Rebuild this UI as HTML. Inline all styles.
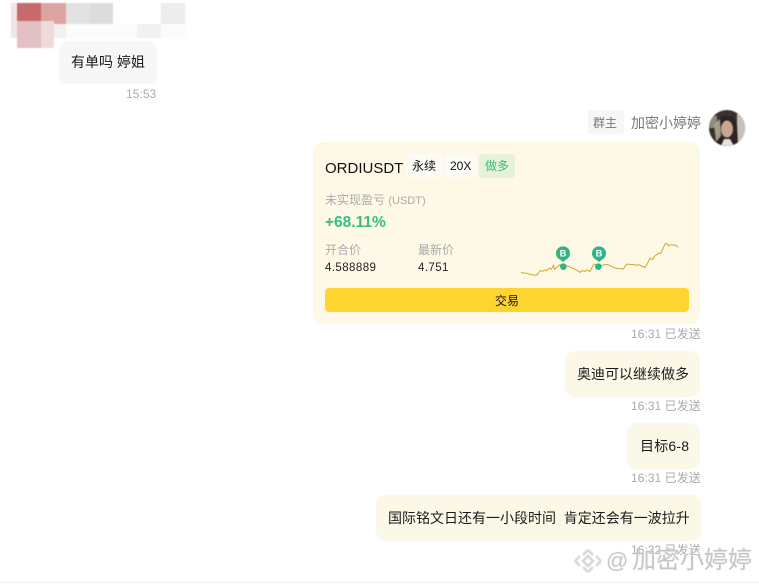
<!DOCTYPE html>
<html><head><meta charset="utf-8">
<style>
html,body{margin:0;padding:0;background:#fff;}
body{width:759px;height:586px;position:relative;overflow:hidden;font-family:"Liberation Sans","Noto Sans CJK SC",sans-serif;color:#111;}
.a{position:absolute;white-space:nowrap;}
.b{position:absolute;border-radius:10px;background:#fbf8e8;}
.t{position:absolute;white-space:nowrap;font-size:12px;color:#aaa;line-height:14px;letter-spacing:.05px;}
.m{position:absolute;white-space:nowrap;font-size:14px;line-height:20px;color:#1a1a1a;}
.p{position:absolute;}
</style></head><body>
<!-- pixelated blur -->
<div class="p" style="left:0;top:0;width:200px;height:50px;filter:blur(.6px)">
<div class="p" style="left:11px;top:3px;width:175px;height:35px;background:#fcfcfc"></div>
<div class="p" style="left:137px;top:24px;width:24px;height:14px;background:#f1f1f1"></div>
<div class="p" style="left:161px;top:3px;width:24px;height:21px;background:#ededed"></div>
<div class="p" style="left:113px;top:3px;width:48px;height:21px;background:#fff"></div>
<div class="p" style="left:66px;top:3px;width:24px;height:21px;background:#e2e2e2"></div>
<div class="p" style="left:90px;top:3px;width:23px;height:21px;background:#dcdcdc"></div>
<div class="p" style="left:17px;top:3px;width:24px;height:21px;background:#c76a6c"></div>
<div class="p" style="left:41px;top:3px;width:25px;height:21px;background:#dca5a1"></div>
<div class="p" style="left:11px;top:3px;width:6px;height:35px;background:#f0e6e4"></div>
<div class="p" style="left:17px;top:21px;width:24px;height:27px;background:#e3c1c3"></div>
<div class="p" style="left:41px;top:21px;width:13px;height:27px;background:#eedbd9"></div>
<div class="p" style="left:54px;top:24px;width:12px;height:14px;background:#f4efed"></div>
</div>

<div class="b" style="left:59px;top:41px;width:98px;height:43px;background:#f7f7f7"></div>
<div class="m" style="left:71px;top:52px;">有单吗 婷姐</div>
<div class="t" style="left:126px;top:87px;">15:53</div>

<!-- header -->
<div class="p" style="left:588px;top:110px;width:36px;height:24px;border-radius:3px;background:#f6f6f6"></div>
<div class="a" style="left:593px;top:116px;font-size:12px;line-height:15px;color:#777">群主</div>
<div class="a" style="left:631px;top:114px;font-size:14px;line-height:18px;color:#777">加密小婷婷</div>
<svg class="p" style="left:709px;top:110px;filter:blur(.5px)" width="36" height="36" viewBox="0 0 36 36">
<defs><clipPath id="c"><circle cx="18" cy="18" r="18"/></clipPath></defs>
<g clip-path="url(#c)">
<rect width="36" height="36" fill="#3a322e"/>
<rect x="28" y="4" width="8" height="32" fill="#c9bfb6"/>
<rect x="0" y="6" width="8" height="12" fill="#8f8a80"/>
<path d="M5 36 L7 14 L13 6 L24 6 L28 14 L29 36Z" fill="#2a2422"/>
<path d="M5 14 L11 9 L12 26 L7 32Z" fill="#a59b88"/>
<ellipse cx="18" cy="19" rx="6" ry="8.500" fill="#c9a691"/>
<path d="M12 36 L15 29 L21 29 L25 36Z" fill="#e6e1da"/>
</g></svg>

<!-- card -->
<div class="b" style="left:313px;top:142px;width:387px;height:182px;background:#fdf9e6"></div>
<div class="a" style="left:325px;top:159px;font-size:15px;line-height:20px;color:#111;">ORDIUSDT</div>
<div class="p" style="left:406px;top:154px;width:36px;height:24px;border-radius:4px;background:#fcfbf5"></div>
<div class="a" style="left:412px;top:159px;font-size:12px;line-height:15px;color:#111">永续</div>
<div class="p" style="left:444px;top:154px;width:33px;height:24px;border-radius:4px;background:#fcfbf5"></div>
<div class="a" style="left:450px;top:159px;font-size:12px;line-height:15px;color:#111">20X</div>
<div class="p" style="left:479px;top:154px;width:36px;height:24px;border-radius:4px;background:#e5f1d9"></div>
<div class="a" style="left:485px;top:159px;font-size:12px;line-height:15px;color:#3cb97f">做多</div>
<div class="a" style="left:325px;top:193px;font-size:12px;line-height:15px;color:#aaa">未实现盈亏 <span style="font-size:11px">(USDT)</span></div>
<div class="a" style="left:325px;top:214px;font-size:15.5px;font-weight:bold;line-height:18px;color:#38bd84">+68.11%</div>
<div class="a" style="left:325px;top:243px;font-size:12px;line-height:15px;color:#aaa">开合价</div>
<div class="a" style="left:418px;top:243px;font-size:12px;line-height:15px;color:#aaa">最新价</div>
<div class="a" style="left:325px;top:261px;font-size:11.5px;line-height:14px;color:#222;letter-spacing:.42px">4.588889</div>
<div class="a" style="left:418px;top:261px;font-size:11.5px;line-height:14px;color:#222;letter-spacing:.42px">4.751</div>
<svg class="p" style="left:510px;top:230px" width="190" height="60" viewBox="0 0 570 180">
<polyline fill="none" stroke="#d8a52c" stroke-width="3" points="33,128 42,129 50,130 56,132 62,133 70,135 78,136 84,132 90,122 96,124 105,120 110,122 118,114 124,118 130,106 134,118 140,112 150,104 160,110 175,108 185,114 195,118 202,122 210,127 216,122 225,124 232,120 240,125 246,112 252,102 265,110 280,105 292,103 300,107 310,112 320,115 330,116 340,117 346,108 352,102 362,104 370,103 378,106 385,104 395,108 405,112 412,100 420,85 428,88 435,78 445,70 452,70 458,58 465,42 470,40 475,48 482,44 490,45 498,46 505,52"/>
<circle cx="160" cy="110" r="10" fill="#2fb583"/>
<circle cx="265" cy="110" r="10" fill="#2fb583"/>
<circle cx="159" cy="70" r="21" fill="#2fb583"/>
<circle cx="267" cy="70" r="21" fill="#2fb583"/>
<path d="M147 86 L159 96 L171 86Z" fill="#2fb583"/>
<path d="M255 86 L267 96 L279 86Z" fill="#2fb583"/>
<text x="159" y="80" text-anchor="middle" font-size="28" font-weight="bold" fill="#fff" font-family="Liberation Sans">B</text>
<text x="267" y="80" text-anchor="middle" font-size="28" font-weight="bold" fill="#fff" font-family="Liberation Sans">B</text>
</svg>
<div class="p" style="left:325px;top:288px;width:364px;height:24px;border-radius:4px;background:#fed431"></div>
<div class="a" style="left:325px;top:294px;width:364px;text-align:center;font-size:12px;line-height:15px;color:#111">交易</div>
<div class="t" style="left:631px;top:327px;">16:31 已发送</div>

<div class="b" style="left:565px;top:351px;width:135px;height:46px;"></div>
<div class="m" style="left:577px;top:364px;">奥迪可以继续做多</div>
<div class="t" style="left:631px;top:399px;">16:31 已发送</div>

<div class="b" style="left:627px;top:423px;width:73px;height:46px;"></div>
<div class="m" style="left:640px;top:436px;letter-spacing:.2px">目标6-8</div>
<div class="t" style="left:631px;top:471px;">16:31 已发送</div>

<div class="b" style="left:376px;top:495px;width:325px;height:46px;"></div>
<div class="m" style="left:388px;top:508px;">国际铭文日还有一小段时间&nbsp;&nbsp;肯定还会有一波拉升</div>
<div class="t" style="left:631px;top:543px;">16:32 已发送</div>

<!-- watermark -->
<svg class="p" style="left:572px;top:546px;filter:blur(.5px)" width="32" height="30" viewBox="0 0 32 30" fill="none" stroke="#d4d4d4" stroke-width="2.400">
<path d="M16 4 L21 9 M16 4 L11 9 M3 15 L8 10 M29 15 L24 10 M3 15 L8 20 M29 15 L24 20 M16 26 L21 21 M16 26 L11 21"/>
<path d="M16 10 L21 15 L16 20 L11 15Z"/>
</svg>
<div class="a" style="left:606px;top:547px;font-size:22px;line-height:28px;color:#c9c9c9;text-shadow:0 0 2px #eee">@</div>
<div class="a" style="left:632px;top:547px;font-size:24px;line-height:28px;color:#c6c6c6;text-shadow:0 0 2px #eee">加密小婷婷</div>
<div class="p" style="left:0;top:582px;width:759px;height:1px;background:#eee"></div>
</body></html>
